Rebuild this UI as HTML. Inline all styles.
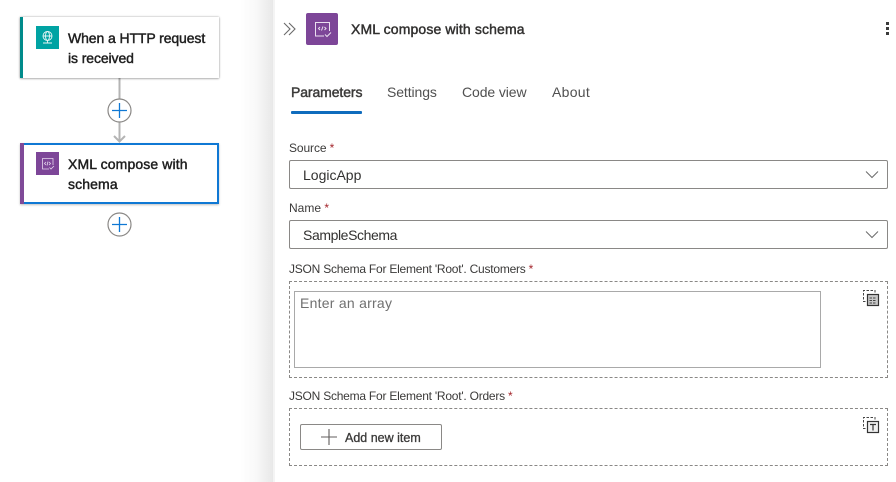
<!DOCTYPE html>
<html>
<head>
<meta charset="utf-8">
<style>
html,body{margin:0;padding:0}
body{width:896px;height:482px;overflow:hidden;background:#fff;position:relative;font-family:"Liberation Sans",sans-serif;color:#242424}
.a{position:absolute;white-space:nowrap}
.card{position:absolute;left:20px;width:199px;height:61px;background:#fff;box-sizing:border-box;box-shadow:0 0 2px rgba(0,0,0,.35),0 1px 2px rgba(0,0,0,.2)}
.bar{position:absolute;left:0;top:0;bottom:0;width:3px}
.ct{font-size:14px;color:#1f1f1f;line-height:20px;-webkit-text-stroke:.45px #1f1f1f}
.lab{font-size:12px;color:#3b3a39;line-height:16px}
.star{color:#a4262c}
.sel{position:absolute;left:289px;width:599px;height:29px;box-sizing:border-box;border:1px solid #8a8886;border-radius:2px;font-size:14px;line-height:28px;padding-left:13px;color:#323130}
.tab{font-size:14px;line-height:20px;color:#505050;position:absolute;top:82px;white-space:nowrap}
.dash{position:absolute;left:289px;width:599px;box-sizing:border-box;border:1px dashed #8a8886}
</style>
</head>
<body>
<div class="a" style="left:240px;top:0;width:33px;height:482px;background:linear-gradient(90deg,#fff 0%,#f8f8f8 50%,#e8e8e8 100%)"></div>
<div class="a" style="left:273px;top:0;width:623px;height:482px;background:#fff"></div>
<div class="a" style="left:273px;top:0;width:2px;height:482px;background:#f4f4f4"></div>

<svg class="a" style="left:100px;top:76px" width="40" height="170" viewBox="0 0 40 170">
  <path d="M19.500 2V65" stroke="#b4b4b4" stroke-width="2" fill="none"/>
  <path d="M14 60L19.500 65.500L25 60" stroke="#b4b4b4" stroke-width="2" fill="none"/>
  <circle cx="19.500" cy="34.500" r="11.500" fill="#fff" stroke="#8a8886" stroke-width="1.200"/>
  <path d="M12 34.500H27M19.500 27V42" stroke="#0f78d4" stroke-width="1.300" fill="none"/>
  <circle cx="19.500" cy="148.500" r="11.500" fill="#fff" stroke="#8a8886" stroke-width="1.200"/>
  <path d="M12 148.500H27M19.500 141V156" stroke="#0f78d4" stroke-width="1.300" fill="none"/>
</svg>

<div class="card" style="top:17px"><div class="bar" style="background:#008b8b;width:3px"></div></div>
<div class="a" style="left:36px;top:26px;width:23px;height:23px;background:#00a3a3"></div>
<svg class="a" style="left:36px;top:26px" width="23" height="23" viewBox="0 0 23 23" fill="none" stroke="#e8f6f6" stroke-width=".9">
  <circle cx="11.500" cy="10" r="4.500"/>
  <ellipse cx="11.500" cy="10" rx="2" ry="4.500"/>
  <path d="M7 10H16M11.500 14.500V17M7 17H16"/>
</svg>
<div class="a ct" style="left:68px;top:28px;letter-spacing:-.1px">When a HTTP request<br>is received</div>

<div class="card" style="top:143px;border:2px solid #0f78d4;box-shadow:0 1px 2px rgba(0,0,0,.25)"><div class="bar" style="background:#7f4a98;left:-2px;top:-2px;bottom:-2px;width:3.500px"></div></div>
<div class="a" style="left:36px;top:152px;width:23px;height:23px;background:#7d4698"></div>
<svg class="a" style="left:36px;top:152px" width="23" height="23" viewBox="0 0 23 23" fill="none" stroke="#e6d8ee" stroke-width=".8">
  <path d="M13 17H6.500V6.500H17V13"/>
  <path d="M10 10L8.500 11.500L10 13M13 10L14.500 11.500L13 13M12 9.500L11 13.500"/>
  <path d="M13.500 15.500L15 17L18 14"/>
</svg>
<div class="a ct" style="left:68px;top:154px;letter-spacing:.12px">XML compose with<br>schema</div>

<svg class="a" style="left:283px;top:21px" width="14" height="16" viewBox="0 0 14 16" fill="none" stroke="#6b6b6b" stroke-width="1.100">
  <path d="M1 2L7 8L1 14M6 2L12 8L6 14"/>
</svg>
<div class="a" style="left:306px;top:13px;width:32px;height:32px;background:#7d4698;border-radius:2px"></div>
<svg class="a" style="left:306px;top:13px" width="32" height="32" viewBox="0 0 32 32" fill="none" stroke="#eadff0" stroke-width="1">
  <path d="M18 23H9.500V9.500H23.500V18"/>
  <path d="M14 14L12.500 15.500L14 17M18.500 14L20 15.500L18.500 17M17 13.500L15.500 17.500"/>
  <path d="M19 21.500L21 23.500L25 19.500"/>
</svg>
<div class="a" style="left:351px;top:19px;font-size:14px;line-height:20px;color:#323130;letter-spacing:.13px;-webkit-text-stroke:.45px #323130">XML compose with schema</div>
<svg class="a" style="left:885px;top:21px" width="6" height="18" viewBox="0 0 6 18" fill="#3b3b3b">
  <rect x="1" y="1" width="3" height="3"/><rect x="1" y="6" width="3" height="3"/><rect x="1" y="11" width="3" height="3"/>
</svg>

<div class="tab" style="left:291px;color:#3b3a39;letter-spacing:-.1px;-webkit-text-stroke:.45px #3b3a39">Parameters</div>
<div class="a" style="left:291px;top:111px;width:71px;height:3px;background:#0f6cbd;border-radius:1px"></div>
<div class="tab" style="left:387px;letter-spacing:-.1px">Settings</div>
<div class="tab" style="left:462px;letter-spacing:-.1px">Code view</div>
<div class="tab" style="left:552px;letter-spacing:.3px">About</div>

<div class="a lab" style="left:289px;top:140px;letter-spacing:-.1px">Source <span class="star">*</span></div>
<div class="sel" style="top:160px">LogicApp</div>
<svg class="a" style="left:865px;top:170px" width="14" height="10" viewBox="0 0 14 10" fill="none" stroke="#6b6b6b" stroke-width="1"><path d="M1 1.500L7 7.500L13 1.500"/></svg>

<div class="a lab" style="left:289px;top:200px">Name <span class="star">*</span></div>
<div class="sel" style="top:220px;letter-spacing:-.4px;line-height:29px">SampleSchema</div>
<svg class="a" style="left:865px;top:230px" width="14" height="10" viewBox="0 0 14 10" fill="none" stroke="#6b6b6b" stroke-width="1"><path d="M1 1.500L7 7.500L13 1.500"/></svg>

<div class="a lab" style="left:289px;top:261px;letter-spacing:-.23px">JSON Schema For Element 'Root'. Customers <span class="star">*</span></div>
<div class="dash" style="top:281px;height:97px"></div>
<div class="a" style="left:294px;top:291px;width:527px;height:77px;box-sizing:border-box;border:1px solid #a9a9a9;font-size:14px;line-height:20px;padding:1px 5px;color:#707070;letter-spacing:.25px">Enter an array</div>
<svg class="a" style="left:862px;top:289px" width="18" height="18" viewBox="0 0 18 18" fill="none">
  <path d="M3.500 12.500H1.500V1.500H13V5" stroke="#444" stroke-width="1" stroke-dasharray="2.500 1.500"/>
  <rect x="5.500" y="5.500" width="11" height="11" fill="#c8c8c8" stroke="#333" stroke-width="1.200"/>
  <path d="M7.500 9H14.500M7.500 11.500H14.500M7.500 14H14.500" stroke="#444" stroke-width="1" stroke-dasharray="2.500 1"/>
</svg>

<div class="a lab" style="left:289px;top:388px;letter-spacing:-.23px">JSON Schema For Element 'Root'. Orders <span class="star">*</span></div>
<div class="dash" style="top:408px;height:58px"></div>
<div class="a" style="left:300px;top:424px;width:142px;height:26px;box-sizing:border-box;border:1px solid #8a8886;border-radius:2px"></div>
<svg class="a" style="left:320px;top:428px" width="18" height="18" viewBox="0 0 18 18" fill="none" stroke="#605e5c" stroke-width="1.100"><path d="M1 9H17M9 1V17"/></svg>
<div class="a" style="left:345px;top:430px;font-size:12.500px;line-height:17px;color:#3b3a39;-webkit-text-stroke:.3px #3b3a39">Add new item</div>
<svg class="a" style="left:862px;top:416px" width="18" height="18" viewBox="0 0 18 18" fill="none">
  <path d="M3.500 12.500H1.500V1.500H13V5" stroke="#444" stroke-width="1" stroke-dasharray="2.500 1.500"/>
  <rect x="5.500" y="5.500" width="11" height="11" fill="#f0f0f0" stroke="#333" stroke-width="1.200"/>
  <path d="M8 8.500H14M11 8.500V14.500" stroke="#333" stroke-width="1.200"/>
</svg>
</body>
</html>
